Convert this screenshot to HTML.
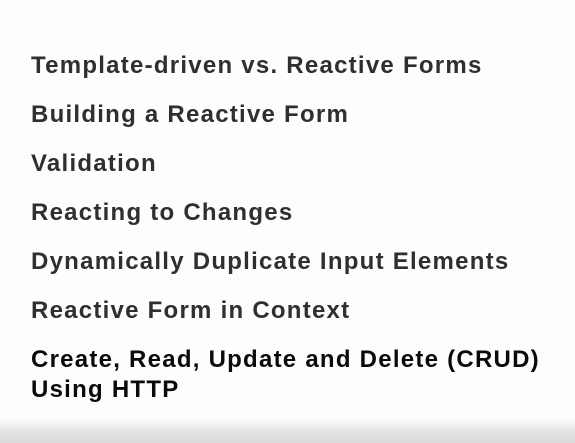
<!DOCTYPE html>
<html><head><style>
html,body{margin:0;padding:0;}
body{width:575px;height:443px;overflow:hidden;background:#fdfdfd;position:relative;font-family:"Liberation Sans",sans-serif;}
.i{position:absolute;left:31px;font-size:24px;font-weight:bold;letter-spacing:1.25px;color:#2f2f2f;line-height:30px;white-space:nowrap;}
.b{color:#0a0a0a;}
.g{position:absolute;left:0;right:0;top:418px;bottom:0;background:linear-gradient(#fdfdfd,#e2e2e2 60%,#dcdcdc);}
</style></head><body>
<div class="i" style="top:51px">Template-driven vs. Reactive Forms</div>
<div class="i" style="top:100px">Building a Reactive Form</div>
<div class="i" style="top:149px">Validation</div>
<div class="i" style="top:198px">Reacting to Changes</div>
<div class="i" style="top:247px">Dynamically Duplicate Input Elements</div>
<div class="i" style="top:296px">Reactive Form in Context</div>
<div class="i b" style="top:345px">Create, Read, Update and Delete (CRUD)<br>Using HTTP</div>
<div class="g"></div>
</body></html>
